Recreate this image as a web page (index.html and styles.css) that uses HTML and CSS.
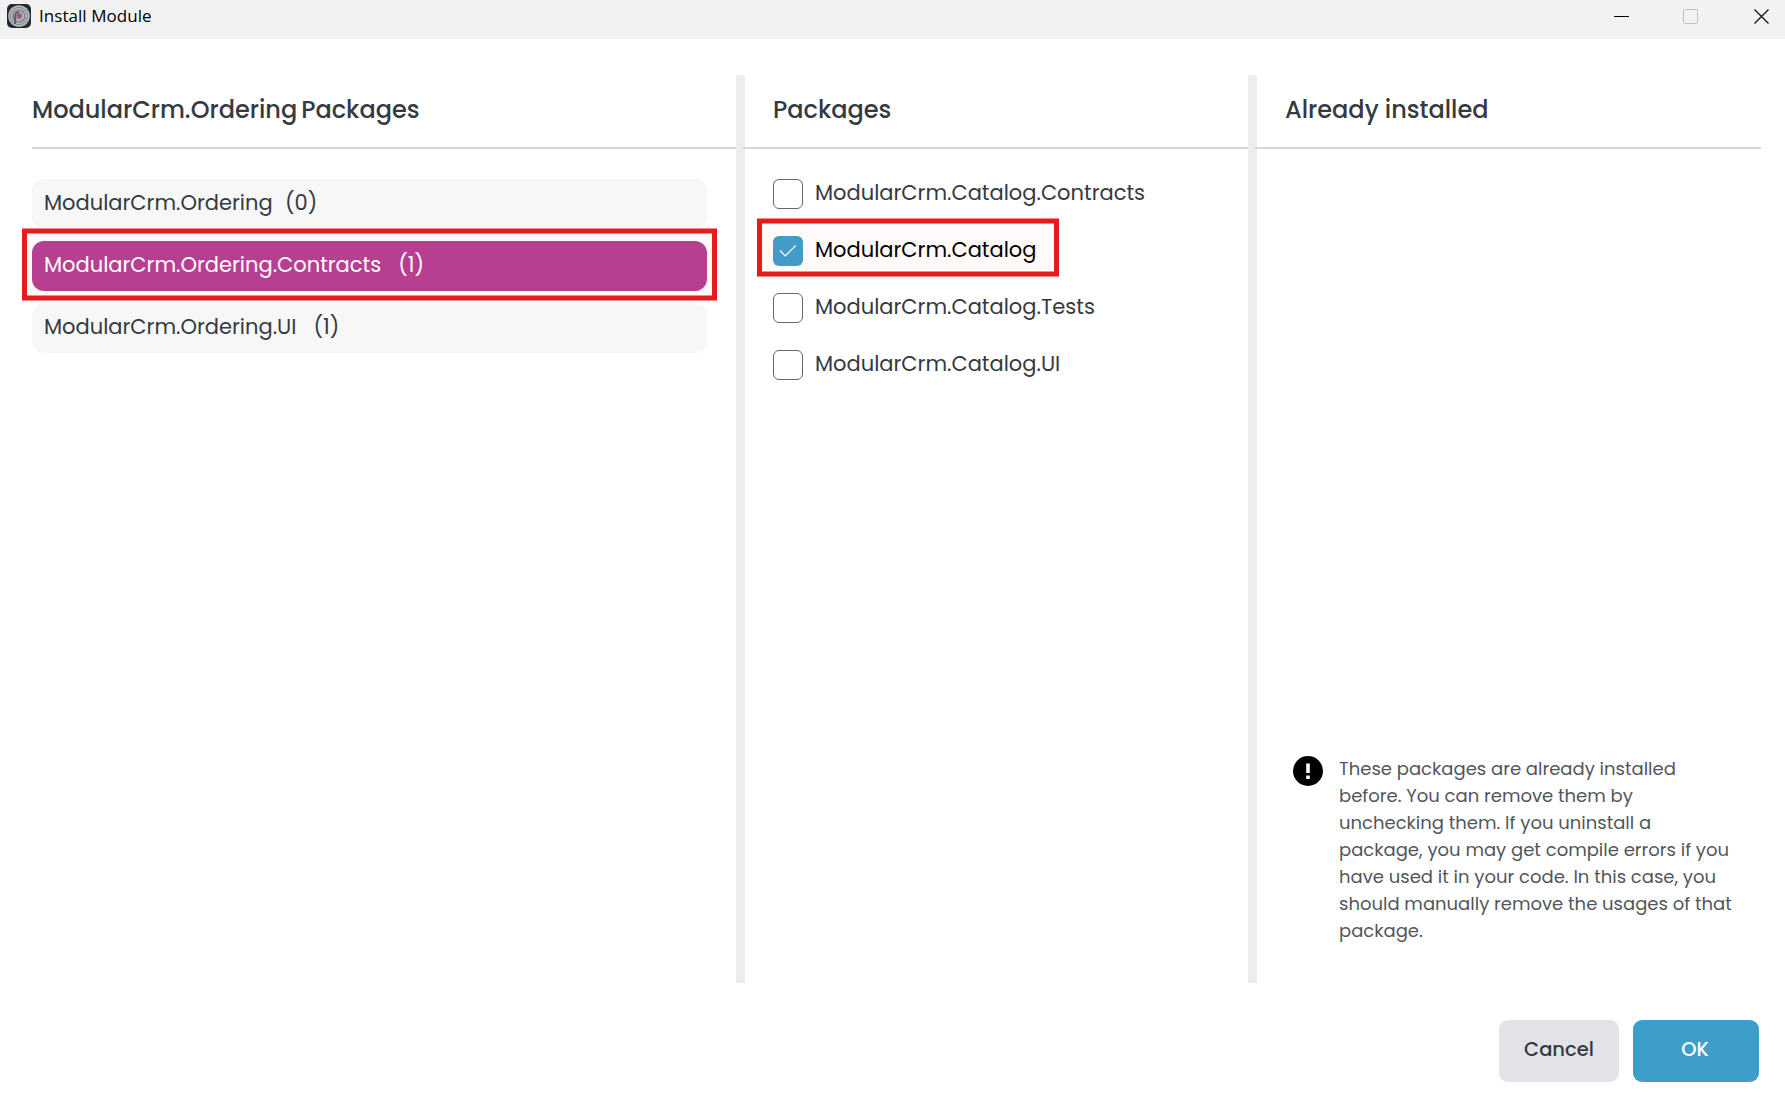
FILE: index.html
```html
<!DOCTYPE html>
<html lang="en">
<head>
<meta charset="utf-8">
<title>Install Module</title>
<link rel="stylesheet" href="styles.css">
</head>
<body>
<div class="window">
  <header class="titlebar">
    <svg class="app-icon" width="24" height="24" viewBox="0 0 24 24">
      <rect width="24" height="24" rx="5" fill="#242a33"/>
      <circle cx="12" cy="12" r="10.8" fill="#b4b5b8"/>
      <circle cx="12" cy="12" r="8.6" fill="none" stroke="#85888c" stroke-width="1"/>
      <circle cx="12" cy="12" r="6" fill="none" stroke="#777a7f" stroke-width="1.2"/>
      <circle cx="12" cy="12" r="3.4" fill="#8f8a8f"/>
      <path d="M8 20V12a4 4 0 0 1 4-4" fill="none" stroke="#4b4e54" stroke-width="1.5"/>
      <circle cx="12.2" cy="11.8" r="2.1" fill="#b53f92"/>
    </svg>
    <span class="window-title">Install Module</span>
    <div class="window-controls">
      <svg width="15" height="15" viewBox="0 0 15 15"><path d="M0 7.5H15" stroke="#000"/></svg>
      <svg width="15" height="15" viewBox="0 0 15 15"><rect x=".5" y=".5" width="14" height="14" rx="1" fill="none" stroke="#c3c3c3"/></svg>
      <svg width="15" height="15" viewBox="0 0 15 15"><path d="M.5 .5L14.5 14.5M14.5 .5L.5 14.5" stroke="#111" stroke-width="1.3"/></svg>
    </div>
  </header>
  <main class="columns">
    <section class="column column-targets">
      <h2 class="heading"><span>ModularCrm.Ordering</span><span class="heading-suffix">Packages</span></h2>
      <ul class="targets">
        <li><div class="target"><span>ModularCrm.Ordering</span><span class="count count-near">(0)</span></div></li>
        <li class="framed"><div class="target selected"><span>ModularCrm.Ordering.Contracts</span><span class="count">(1)</span></div></li>
        <li><div class="target"><span>ModularCrm.Ordering.UI</span><span class="count">(1)</span></div></li>
      </ul>
    </section>
    <div class="divider"></div>
    <section class="column column-packages">
      <h2 class="heading">Packages</h2>
      <ul class="packages">
        <li class="package"><span class="box"></span><span>ModularCrm.Catalog.Contracts</span></li>
        <li class="package framed checked"><span class="box"><svg width="18" height="14" viewBox="0 0 18 14"><path d="M1 6.5L6.2 12L16.8 1.3" fill="none" stroke="#fff" stroke-width="1.2"/></svg></span><span>ModularCrm.Catalog</span></li>
        <li class="package"><span class="box"></span><span>ModularCrm.Catalog.Tests</span></li>
        <li class="package"><span class="box"></span><span>ModularCrm.Catalog.UI</span></li>
      </ul>
    </section>
    <div class="divider"></div>
    <section class="column column-installed">
      <h2 class="heading">Already installed</h2>
      <div class="note">
        <svg width="30" height="30" viewBox="0 0 30 30"><circle cx="15" cy="15" r="15" fill="#000"/><path d="M13.2 7.5H16.8V17H13.2ZM13.2 19.5H16.8V23H13.2Z" fill="#fff"/></svg>
        <p class="note-text">These packages are already installed<br>before. You can remove them by<br>unchecking them. If you uninstall a<br>package, you may get compile errors if you<br>have used it in your code. In this case, you<br>should manually remove the usages of that<br>package.</p>
      </div>
    </section>
  </main>
  <footer class="actions">
    <button class="button cancel">Cancel</button>
    <button class="button ok">OK</button>
  </footer>
</div>
</body>
</html>
```
FILE: styles.css
```css
* { box-sizing: border-box; }
body { margin: 0; background: #fff; color: #343a40; font-family: Poppins, Inter, sans-serif; }
h2, ul, p { margin: 0; padding: 0; list-style: none; }
.window { width: 1785px; height: 1112px; display: flex; flex-direction: column; }
.titlebar { flex: none; height: 39px; background: #f2f2f2; display: flex; align-items: flex-start; padding: 4px 16px 0 7px; }
.window-title { margin-left: 8px; color: #000; font: 17px/24px "Open Sans", sans-serif; letter-spacing: 0.05px; }
.window-controls { display: flex; gap: 54px; margin: 5px 0 0 auto; }
.window-controls svg:last-child { margin-left: 2px; }
.columns { flex: none; display: flex; height: 908px; margin: 36px 24px 0 32px; }
.divider { flex: none; width: 9px; background: #ecedef; }
.column { display: flex; flex-direction: column; }
.column-targets { width: 704px; }
.column-packages { width: 503px; }
.column-installed { width: 504px; }
.heading { height: 74px; border-bottom: 2px solid #d7d8df; font-size: 24px; line-height: 70px; font-weight: 500; white-space: nowrap; }
.heading-suffix { margin-left: 4px; }
.divider + .column .heading { margin-left: -2px; padding-left: 30px; }
.targets { display: flex; flex-direction: column; gap: 12px; padding: 30px 29px 0 0; }
.target { display: flex; height: 50px; padding-left: 12px; border-radius: 12px; background: #f7f7f7; font-size: 21px; line-height: 48px; white-space: nowrap; }
.selected { background: #b73f92; color: #fff; }
.count { margin-left: 17px; }
.count-near { margin-left: 12.4px; }
.framed { position: relative; isolation: isolate; }
.framed::before { content: ""; position: absolute; z-index: -1; inset: -12px -10px -9px; border: solid #e81b1c; border-width: 4px 5px; background: #fff9f9; box-shadow: 0 1px #f28a8b, 0 -1px #f28a8b, inset 0 1px #f28a8b, inset 0 -1px #f28a8b; }
.packages { display: flex; flex-direction: column; align-items: flex-start; gap: 27px; padding: 30px 28px; }
.package { display: flex; gap: 12px; height: 30px; font-size: 21px; line-height: 28px; white-space: nowrap; }
.package.framed::before { inset: -17px -22px -10px -16px; }
.box { width: 30px; height: 30px; border: 1.5px solid #666; border-radius: 6px; background: #fff; }
.checked { color: #000; }
.checked .box { display: flex; align-items: center; justify-content: center; border: 0; background: #449bc7; }
.note { display: flex; gap: 16px; margin: auto 0 39px 36px; }
.note svg { margin-top: 1px; }
.note-text { font-size: 18px; line-height: 27px; white-space: nowrap; color: #51565c; }
.actions { display: flex; justify-content: flex-end; gap: 14px; padding: 37px 26px 0; }
.button { width: 120px; height: 62px; padding: 0 0 2px; border: 0; border-radius: 9px; background: #e2e3e7; color: #343a40; font: 500 19.5px/58px Poppins, Inter, sans-serif; }
.ok { width: 126px; padding-right: 2px; background: #3e9eca; color: #fff; }
```
